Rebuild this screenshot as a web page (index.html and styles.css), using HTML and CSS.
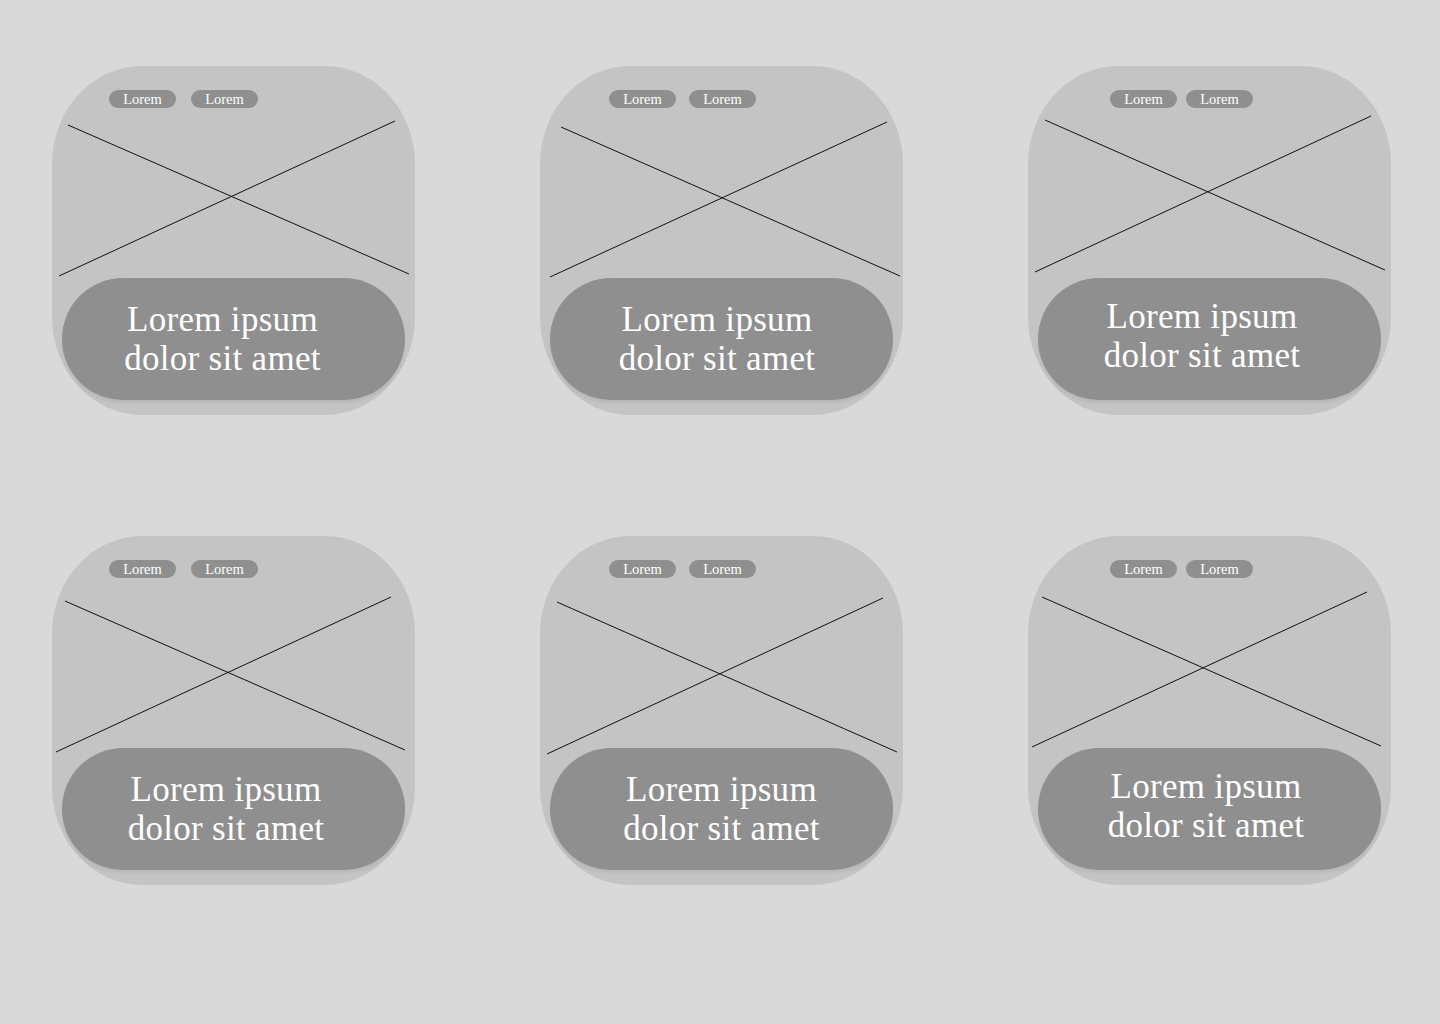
FILE: index.html
```html
<!DOCTYPE html>
<html lang="en">
<head>
    <meta charset="UTF-8">
    <meta name="viewport" content="width=device-width, initial-scale=1.0">
    <title>Cards</title>
    <link rel="stylesheet" href="styles.css">
</head>
<body>
    <div class="grid">
        <div class="card">
            <svg class="placeholder" viewBox="0 0 363 349"><line x1="16" y1="59" x2="357" y2="208"/><line x1="7" y1="210" x2="343" y2="55"/></svg>
            <div class="tags" style="padding-left:57px"><span class="tag">Lorem</span><span class="tag">Lorem</span></div>
            <div class="caption"><p style="margin-left:-22px">Lorem ipsum<br>dolor sit amet</p></div>
        </div>
        <div class="card">
            <svg class="placeholder" viewBox="0 0 363 349"><line x1="21" y1="61" x2="360" y2="210"/><line x1="10" y1="211" x2="347" y2="56"/></svg>
            <div class="tags tags-mid" style="padding-left:69px"><span class="tag">Lorem</span><span class="tag">Lorem</span></div>
            <div class="caption"><p style="margin-left:-9px">Lorem ipsum<br>dolor sit amet</p></div>
        </div>
        <div class="card">
            <svg class="placeholder" viewBox="0 0 363 349"><line x1="17" y1="54" x2="357" y2="204"/><line x1="7" y1="206" x2="343" y2="50"/></svg>
            <div class="tags tags-tight" style="padding-left:82px"><span class="tag">Lorem</span><span class="tag">Lorem</span></div>
            <div class="caption caption-up"><p style="margin-left:-15px">Lorem ipsum<br>dolor sit amet</p></div>
        </div>
        <div class="card">
            <svg class="placeholder" viewBox="0 0 363 349"><line x1="13" y1="65" x2="353" y2="214"/><line x1="4" y1="216" x2="339" y2="61"/></svg>
            <div class="tags" style="padding-left:57px"><span class="tag">Lorem</span><span class="tag">Lorem</span></div>
            <div class="caption"><p style="margin-left:-15px">Lorem ipsum<br>dolor sit amet</p></div>
        </div>
        <div class="card">
            <svg class="placeholder" viewBox="0 0 363 349"><line x1="17" y1="66" x2="357" y2="216"/><line x1="7" y1="218" x2="343" y2="62"/></svg>
            <div class="tags tags-mid" style="padding-left:69px"><span class="tag">Lorem</span><span class="tag">Lorem</span></div>
            <div class="caption"><p>Lorem ipsum<br>dolor sit amet</p></div>
        </div>
        <div class="card">
            <svg class="placeholder" viewBox="0 0 363 349"><line x1="14" y1="61" x2="353" y2="210"/><line x1="4" y1="211" x2="339" y2="56"/></svg>
            <div class="tags tags-tight" style="padding-left:82px"><span class="tag">Lorem</span><span class="tag">Lorem</span></div>
            <div class="caption caption-up"><p style="margin-left:-7px">Lorem ipsum<br>dolor sit amet</p></div>
        </div>
    </div>
</body>
</html>
```

FILE: styles.css
```css
body { margin: 0; background-color: #d9d9d9; font-family: "Liberation Serif", "DejaVu Serif", serif; color: #fff; }
.grid { display: grid; grid-template-columns: repeat(3, 363px); column-gap: 125px; row-gap: 121px; padding: 66px 0 0 52px; }
.card { position: relative; height: 349px; background-color: #c4c4c4; border-radius: 90px / 98px; display: flex; flex-direction: column; }
.placeholder { position: absolute; left: 0; top: 0; width: 363px; height: 349px; }
.placeholder line { stroke: #111; stroke-width: 1; }
.tags { position: relative; display: flex; gap: 15px; margin-top: 24px; height: 18px; }
.tags-mid { gap: 13px; }
.tags-tight { gap: 9px; }
.tag { width: 67px; height: 18px; border-radius: 9px; background-color: #8f8f8f; font-size: 14.5px; line-height: 18px; text-align: center; }
.caption { position: relative; margin: auto 10px 15px; height: 122px; border-radius: 61px; background-color: #8f8f8f; box-shadow: 0 3px 3px rgba(0,0,0,0.06); display: flex; align-items: center; justify-content: center; }
.caption p { margin: 0; font-size: 35px; line-height: 39px; text-align: center; letter-spacing: 0.3px; }
.caption-up p { margin-bottom: 6px; }
```
